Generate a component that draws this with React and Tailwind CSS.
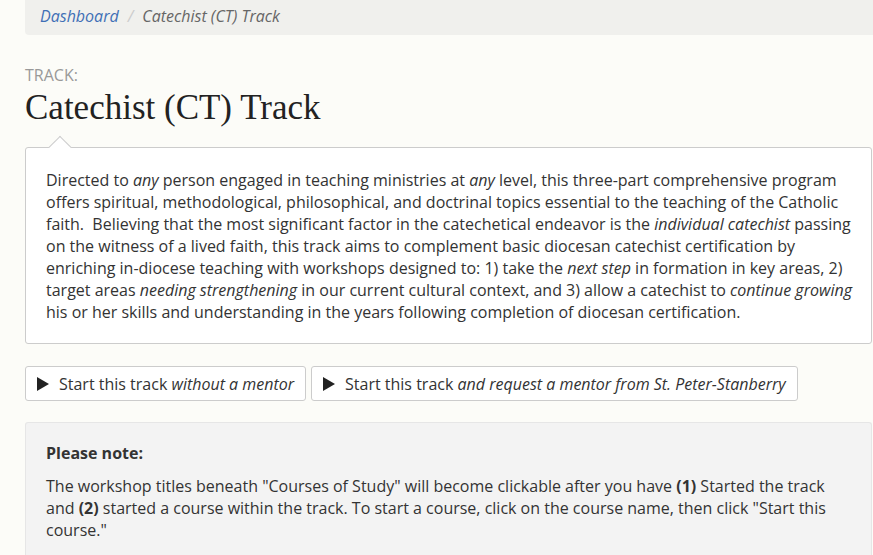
// App.jsx
function Play() {
    return (
        <svg width="12" height="14" viewBox="0 0 12 14" className="shrink-0">
            <polygon points="0,0 12,7 0,14" fill="#222" />
        </svg>
    );
}

export default function App() {
    return (
        <div className="min-h-[555px] bg-[#fcfcf8] text-[#333] font-['Open_Sans',sans-serif]">
            <div className="ml-[25px] w-[848px]">
                <div className="h-[35px] bg-[#f0f0ed] rounded-bl-[4px] pl-[15px] flex items-center pb-[3px] text-[16px] italic">
                    <span className="text-[#3f6fb6]">Dashboard</span>
                    <span className="text-[#ccc] mx-[9px]">/</span>
                    <span className="text-[#666]">Catechist (CT) Track</span>
                </div>

                <div className="mt-[29px] text-[16px] leading-[22px] text-[#999] uppercase">Track:</div>
                <h1 className="mt-[2px] text-[35px] leading-[40px] text-[#222] font-['Liberation_Serif',serif]">
                    Catechist (CT) Track
                </h1>

                <div className="relative mt-[19px] w-[847px] bg-white border border-[#ccc] rounded-[3px] pl-[20px] pr-[10px] pt-[21px] pb-[20px] text-[16px] leading-[22px]">
                    <div className="absolute -top-[9px] left-[26px] w-[16px] h-[16px] rotate-45 bg-white border-l border-t border-[#ccc]" />
                    <p className="relative">
                        Directed to <em>any</em> person engaged in teaching ministries at <em>any</em> level, this three-part comprehensive program offers spiritual, methodological, philosophical, and doctrinal topics essential to the teaching of the Catholic faith.&nbsp; Believing that the most significant factor in the catechetical endeavor is the <em>individual catechist</em> passing on the witness of a lived faith, this track aims to complement basic diocesan catechist certification by enriching in-diocese teaching with workshops designed to: 1) take the <em>next step</em> in formation in key areas, 2) target areas <em>needing strengthening</em> in our current cultural context, and 3) allow a catechist to <em>continue growing</em> his or her skills and understanding in the years following completion of diocesan certification.
                    </p>
                </div>

                <div className="mt-[22px] flex gap-[5px]">
                    <button className="h-[35px] flex items-center gap-[10px] pl-[11px] pr-[11px] bg-white border border-[#ccc] rounded-[3px] text-[16px]">
                        <Play />
                        <span>Start this track <em>without a mentor</em></span>
                    </button>
                    <button className="h-[35px] flex items-center gap-[10px] pl-[11px] pr-[11px] bg-white border border-[#ccc] rounded-[3px] text-[16px]">
                        <Play />
                        <span>Start this track <em>and request a mentor from St. Peter-Stanberry</em></span>
                    </button>
                </div>

                <div className="mt-[21px] w-[847px] h-[140px] bg-[#f3f3f3] border-t border-x border-[#e6e6e6] rounded-t-[3px] px-[20px] pt-[19px] text-[16px] leading-[22px]">
                    <p className="font-bold">Please note:</p>
                    <p className="mt-[11px]">
                        The workshop titles beneath "Courses of Study" will become clickable after you have <strong>(1)</strong> Started the track and <strong>(2)</strong> started a course within the track. To start a course, click on the course name, then click "Start this course."
                    </p>
                </div>
            </div>
        </div>
    );
}
